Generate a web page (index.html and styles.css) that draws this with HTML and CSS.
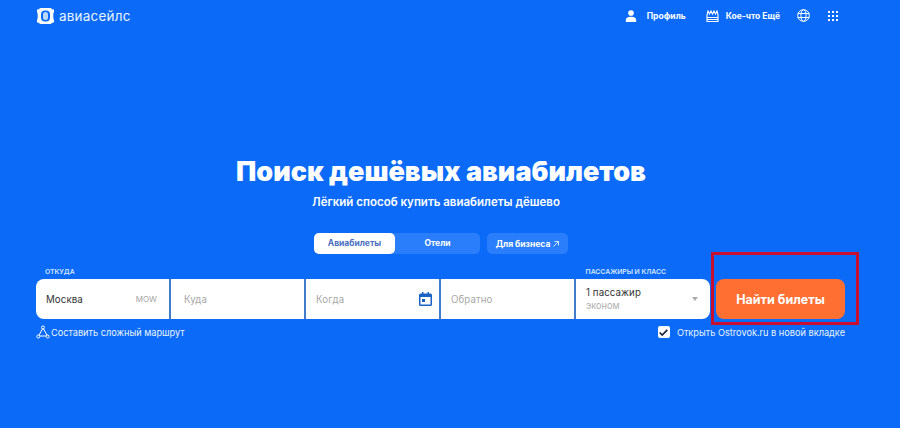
FILE: index.html
```html
<!DOCTYPE html>
<html lang="ru">
<head>
  <meta charset="UTF-8" />
  <meta name="viewport" content="width=device-width, initial-scale=1.0"/>
  <title>Авиасейлс</title>
  <link rel="stylesheet" href="styles.css">
</head>
<body>

  <header class="topbar">
    <div class="brand">
      <svg class="brand-icon" width="17" height="16" viewBox="0 0 17 16">
        <path fill="#fff" d="M3 0h11c.6 1 1.600 1.500 3 1.500v2.500c-1 .8-1 7.200 0 8v2.500c-1.400 0-2.400.5-3 1.500H3c-.6-1-1.600-1.500-3-1.500V12c1-.8 1-7.200 0-8V1.500C1.400 1.500 2.400 1 3 0z"/>
        <rect x="4" y="2.500" width="9" height="11" rx="4" fill="#0b6bf8"/>
        <rect x="6" y="4" width="5" height="8" rx="2.500" fill="#bcd8ff"/>
      </svg>
      <span class="brand-name">авиасейлс</span>
    </div>
    <nav class="topnav">
      <a class="nav-item nav-profile">
        <svg width="12" height="12" viewBox="0 0 14 14"><circle cx="7" cy="3.500" r="3.300" fill="#fff"/><path fill="#fff" d="M1 14v-2.500C1 9.300 3.500 8 7 8s6 1.300 6 3.500V14z"/></svg>
        <span>Профиль</span>
      </a>
      <a class="nav-item nav-more">
        <svg width="13" height="12" viewBox="0 0 13 12" fill="none" stroke="#fff" stroke-width="1.100">
          <path d="M1 11.500V5l1-4 1.500 3L5 1l1.500 3L8 1l1.500 3L11 1l1 4v6.500z"/>
          <path d="M1 7.500h11M1 9.500h11"/>
        </svg>
        <span>Кое-что Ещё</span>
      </a>
      <a class="nav-icon nav-globe">
        <svg width="13" height="13" viewBox="0 0 13 13" fill="none" stroke="#fff" stroke-width="1">
          <circle cx="6.500" cy="6.500" r="5.800"/>
          <ellipse cx="6.500" cy="6.500" rx="2.600" ry="5.800"/>
          <path d="M.7 4.500h11.600M.7 8.500h11.600"/>
        </svg>
      </a>
      <a class="nav-icon">
        <svg width="10" height="10" viewBox="0 0 10 10" fill="#fff">
          <rect width="2" height="2"/><rect x="4" width="2" height="2"/><rect x="8" width="2" height="2"/>
          <rect y="4" width="2" height="2"/><rect x="4" y="4" width="2" height="2"/><rect x="8" y="4" width="2" height="2"/>
          <rect y="8" width="2" height="2"/><rect x="4" y="8" width="2" height="2"/><rect x="8" y="8" width="2" height="2"/>
        </svg>
      </a>
    </nav>
  </header>

  <main class="hero">
    <h1>Поиск дешёвых авиабилетов</h1>
    <p class="subtitle">Лёгкий способ купить авиабилеты дёшево</p>

    <div class="tabs">
      <div class="tab-group">
        <span class="tab tab-active">Авиабилеты</span>
        <span class="tab">Отели</span>
      </div>
      <span class="tab-business">Для бизнеса <svg width="6" height="6" viewBox="0 0 6 6" fill="none" stroke="#fff" stroke-width=".8"><path d="M.5 5.500l5-5M1.500.5h4v4"/></svg></span>
    </div>

    <div class="search">
      <div class="labels">
        <span class="label label-from">Откуда</span>
        <span class="label label-pax">Пассажиры и класс</span>
      </div>
      <div class="search-row">
        <div class="fields">
          <div class="field field-from"><span class="value">Москва</span><span class="iata">MOW</span></div>
          <div class="field field-to"><span class="placeholder">Куда</span></div>
          <div class="field field-date">
            <span class="placeholder">Когда</span>
            <svg class="calendar" width="13" height="14" viewBox="0 0 13 14">
              <path fill="#1a63c4" d="M3 0h1.500v1.500h4V0H10v1.500h1.500A1.500 1.500 0 0 1 13 3v9.500a1.500 1.500 0 0 1-1.500 1.500h-10A1.500 1.500 0 0 1 0 12.500V3a1.500 1.500 0 0 1 1.500-1.500H3zM1.500 5v7.500h10V5z"/>
              <rect x="3" y="7" width="3" height="3" fill="#1a63c4"/>
            </svg>
          </div>
          <div class="field"><span class="placeholder">Обратно</span></div>
          <div class="field field-pax">
            <div class="pax-text">
              <span class="value">1 пассажир</span>
              <span class="pax-class">эконом</span>
            </div>
            <span class="caret"></span>
          </div>
        </div>
        <button class="find-btn">Найти билеты</button>
      </div>
      <div class="options">
        <span class="route-link">
          <svg width="14" height="14" viewBox="0 0 14 14" fill="none" stroke="#fff" stroke-width="1"><path d="M7 3L2.500 11h9z"/><circle cx="7" cy="2.500" r="1.500" fill="#0b6bf8"/><circle cx="2.300" cy="11.500" r="1.500" fill="#0b6bf8"/><circle cx="11.700" cy="11.500" r="1.500" fill="#0b6bf8"/></svg>
          Составить сложный маршрут
        </span>
        <span class="ostrovok">
          <span class="checkbox"><svg width="9" height="7" viewBox="0 0 9 7" fill="none" stroke="#16233f" stroke-width="1.700"><path d="M.7 3.500l2.500 2.500L8.300.8"/></svg></span>
          Открыть Ostrovok.ru в новой вкладке
        </span>
      </div>
      <div class="highlight"></div>
    </div>
  </main>

</body>
</html>
```

FILE: styles.css
```css
body {
  font-family: 'Inter', sans-serif;
  background: #0b6bf8;
  color: #fff;
  margin: 0;
  height: 428px;
  overflow: hidden;
}
.topbar {
  display: flex;
  justify-content: space-between;
  align-items: center;
  height: 31px;
  padding: 0 62px 0 37px;
}
.brand {
  display: flex;
  align-items: center;
  gap: 5px;
}
.brand-name {
  font-size: 13.500px;
  letter-spacing: 0.2px;
  color: #eaf3ff;
}
.topnav {
  display: flex;
  align-items: center;
}
.nav-item {
  display: flex;
  align-items: center;
  font-size: 8.500px;
  font-weight: 700;
}
.nav-item svg {
  display: block;
}
.nav-profile {
  gap: 10px;
}
.nav-more {
  gap: 7px;
  margin-left: 20px;
}
.nav-icon {
  display: flex;
}
.nav-globe {
  margin: 0 18px 0 17px;
}
.hero {
  display: flex;
  flex-direction: column;
  align-items: center;
  padding: 123px 18px 0 0;
}
h1 {
  font-size: 27px;
  line-height: 36px;
  font-weight: 900;
  margin: 0;
  letter-spacing: 0;
}
.subtitle {
  font-size: 11.500px;
  font-weight: 600;
  line-height: 14px;
  margin: 5px 10px 0 0;
}
.tabs {
  display: flex;
  gap: 7px;
  margin-top: 24px;
}
.tab-group {
  display: flex;
  background: #2a7dfb;
  border-radius: 5px;
}
.tab {
  width: 81px;
  height: 21px;
  line-height: 21px;
  text-align: center;
  font-size: 8.500px;
  font-weight: 700;
  border-radius: 5px;
}
.tab + .tab {
  width: 85px;
}
.tab-active {
  background: #fff;
  color: #4a6fc0;
}
.tab-business {
  display: flex;
  align-items: center;
  justify-content: center;
  gap: 3px;
  width: 81px;
  height: 21px;
  font-size: 8.500px;
  font-weight: 700;
  background: #2a7dfb;
  border-radius: 5px;
}
.search {
  position: relative;
  align-self: flex-start;
  width: 809px;
  margin: 12px 0 0 36px;
}
.labels {
  display: flex;
  height: 13px;
  align-items: flex-start;
}
.label {
  font-size: 6.800px;
  line-height: 11px;
  font-weight: 600;
  text-transform: uppercase;
  color: #d5e6ff;
}
.label-from {
  margin-left: 9px;
}
.label-pax {
  margin-left: 511px;
}
.search-row {
  display: flex;
  gap: 6px;
}
.fields {
  display: flex;
  width: 674px;
  height: 40px;
  background: #fff;
  border-radius: 8px;
  overflow: hidden;
}
.field {
  display: flex;
  align-items: center;
  justify-content: space-between;
  flex: 0 0 135px;
  box-sizing: border-box;
  padding: 0 11px 0 10px;
  border-left: 2px solid #3f7cc9;
}
.field-from {
  flex-basis: 133px;
  border-left: 0;
  padding: 0 12px 0 10px;
}
.field-to {
  padding-left: 13px;
}
.field-date {
  padding-right: 7px;
}
.field-pax {
  flex: 1;
  padding: 0 12px 0 10px;
}
.value {
  font-size: 9.700px;
  letter-spacing: 0.1px;
  color: #333;
}
.iata {
  font-size: 8px;
  color: #a3a3a3;
}
.placeholder {
  font-size: 9.700px;
  letter-spacing: 0.1px;
  color: #a8a8a8;
}
.calendar {
  display: block;
}
.pax-text {
  display: flex;
  flex-direction: column;
  line-height: 13px;
}
.pax-class {
  font-size: 9.200px;
  color: #b0b0b0;
}
.caret {
  width: 0;
  height: 0;
  border-left: 3px solid transparent;
  border-right: 3px solid transparent;
  border-top: 4px solid #aaa;
}
.find-btn {
  width: 129px;
  height: 40px;
  padding: 0;
  border: none;
  border-radius: 8px;
  background: #ff6f32;
  color: #fff;
  font-family: inherit;
  font-size: 12.500px;
  font-weight: 700;
}
.options {
  display: flex;
  justify-content: space-between;
  align-items: center;
  height: 14px;
  margin-top: 6px;
  font-size: 9.200px;
  color: #eaf3ff;
}
.route-link {
  display: flex;
  align-items: center;
  gap: 1px;
}
.ostrovok {
  display: flex;
  align-items: center;
  gap: 7px;
}
.checkbox {
  display: flex;
  align-items: center;
  justify-content: center;
  width: 12px;
  height: 12px;
  background: #fff;
  border-radius: 2px;
}
.highlight {
  position: absolute;
  left: 675px;
  top: -14px;
  width: 142px;
  height: 67px;
  border: 3px solid #c90f30;
}
```
